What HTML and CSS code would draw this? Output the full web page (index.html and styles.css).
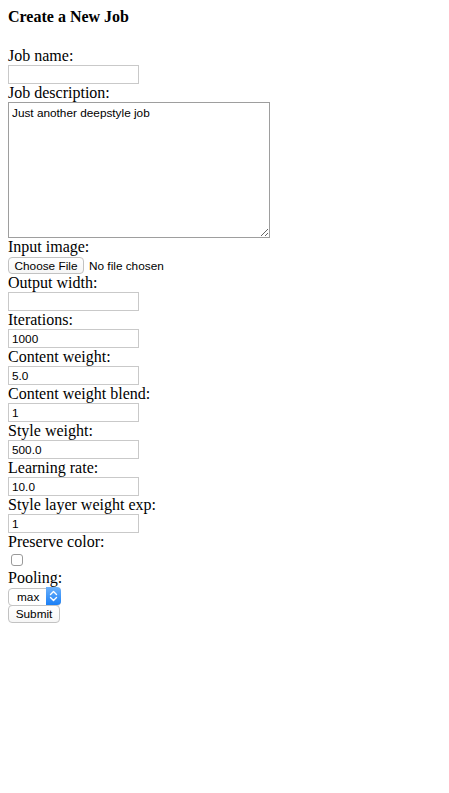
FILE: index.html
```html
<!DOCTYPE html>
<html>
<head>
<meta charset="utf-8">
<title>Create a New Job</title>
<link rel="stylesheet" href="styles.css">
</head>
<body>
<h4 class="title">Create a New Job</h4>
<form class="job-form">
  <label class="field-label" for="name">Job name:</label>
  <input class="text-input" id="name" type="text">
  <label class="field-label" for="desc">Job description:</label>
  <textarea class="desc-input" id="desc">Just another deepstyle job</textarea>
  <label class="field-label" for="img">Input image:</label>
  <input class="file-input" id="img" type="file">
  <label class="field-label" for="width">Output width:</label>
  <input class="text-input" id="width" type="text">
  <label class="field-label" for="iter">Iterations:</label>
  <input class="text-input" id="iter" type="text" value="1000">
  <label class="field-label" for="cw">Content weight:</label>
  <input class="text-input" id="cw" type="text" value="5.0">
  <label class="field-label" for="cwb">Content weight blend:</label>
  <input class="text-input" id="cwb" type="text" value="1">
  <label class="field-label" for="sw">Style weight:</label>
  <input class="text-input" id="sw" type="text" value="500.0">
  <label class="field-label" for="lr">Learning rate:</label>
  <input class="text-input" id="lr" type="text" value="10.0">
  <label class="field-label" for="slw">Style layer weight exp:</label>
  <input class="text-input" id="slw" type="text" value="1">
  <label class="field-label" for="pc">Preserve color:</label>
  <input class="check-input" id="pc" type="checkbox">
  <label class="field-label" for="pool">Pooling:</label>
  <span class="select-wrap">
    <select class="select-input" id="pool">
      <option>max</option>
      <option>avg</option>
    </select>
    <span class="select-arrows">
      <svg width="9" height="12" viewBox="0 0 9 12"><path d="M1.5 4.5 L4.5 1.5 L7.5 4.5 M1.5 7.5 L4.5 10.5 L7.5 7.5" fill="none" stroke="#fff" stroke-width="1.4" stroke-linecap="round" stroke-linejoin="round"/></svg>
    </span>
  </span>
  <button class="submit-btn" type="submit">Submit</button>
</form>
</body>
</html>
```

FILE: styles.css
```css
html, body {
  background: #fff;
}
body {
  margin: 8px;
  font-family: "Liberation Serif", "Times New Roman", serif;
  font-size: 16px;
  line-height: 18px;
  color: #000;
}
.title {
  margin: 0 0 21px 0;
  font-size: 16px;
  line-height: 18px;
  font-weight: bold;
}
.job-form {
  display: flex;
  flex-direction: column;
  align-items: flex-start;
}
.field-label {
  display: block;
  height: 18px;
  line-height: 18px;
}
.text-input {
  appearance: none;
  box-sizing: border-box;
  width: 131px;
  height: 19px;
  margin: 0;
  padding: 1px 3px 0 3px;
  border: 1px solid #c9c9c9;
  border-radius: 0;
  background: #fff;
  font-family: "Liberation Sans", Arial, sans-serif;
  font-size: 11.8px;
  color: #000;
  outline: none;
}
.desc-input {
  box-sizing: border-box;
  width: 262px;
  height: 136px;
  margin: 0;
  padding: 3px 3px;
  border: 1px solid #9e9e9e;
  border-radius: 0;
  font-family: "Liberation Sans", Arial, sans-serif;
  font-size: 11.8px;
  line-height: 14px;
  color: #000;
  resize: both;
  outline: none;
}
.file-input {
  box-sizing: border-box;
  height: 18px;
  margin: 0;
  padding: 1px 0 0 0;
  font-family: "Liberation Sans", Arial, sans-serif;
  font-size: 11.8px;
  line-height: 15px;
  color: #000;
}
.file-input::file-selector-button {
  box-sizing: border-box;
  width: 76px;
  height: 17px;
  margin: 0 5px 0 0;
  padding: 0;
  border: 1px solid #c2c2c2;
  border-radius: 4px;
  background: linear-gradient(#fff, #f6f6f6);
  font-family: "Liberation Sans", Arial, sans-serif;
  font-size: 11.8px;
  color: #000;
}
.check-input {
  appearance: none;
  box-sizing: border-box;
  width: 12px;
  height: 12px;
  margin: 3px 3px 3px 3px;
  border: 1px solid #9a9a9a;
  border-radius: 3px;
  background: #fff;
}
.select-wrap {
  position: relative;
  display: block;
  width: 53px;
  height: 18px;
}
.select-input {
  appearance: none;
  box-sizing: border-box;
  width: 53px;
  height: 18px;
  margin: 0;
  padding: 0 0 0 8px;
  border: 1px solid #c4c4c4;
  border-radius: 4px;
  background: #fff;
  font-family: "Liberation Sans", Arial, sans-serif;
  font-size: 11.8px;
  color: #000;
  outline: none;
}
.select-arrows {
  position: absolute;
  top: 0;
  right: 0;
  width: 15px;
  height: 18px;
  box-sizing: border-box;
  border-radius: 0 4px 4px 0;
  background: linear-gradient(#6cb1fb, #1a7ff6);
  display: flex;
  align-items: center;
  justify-content: center;
  pointer-events: none;
}
.select-arrows svg {
  display: block;
}
.submit-btn {
  box-sizing: border-box;
  width: 52px;
  height: 18px;
  margin: 0;
  padding: 0;
  border: 1px solid #c2c2c2;
  border-radius: 4px;
  background: linear-gradient(#fff, #f6f6f6);
  font-family: "Liberation Sans", Arial, sans-serif;
  font-size: 11.8px;
  color: #000;
}
```
